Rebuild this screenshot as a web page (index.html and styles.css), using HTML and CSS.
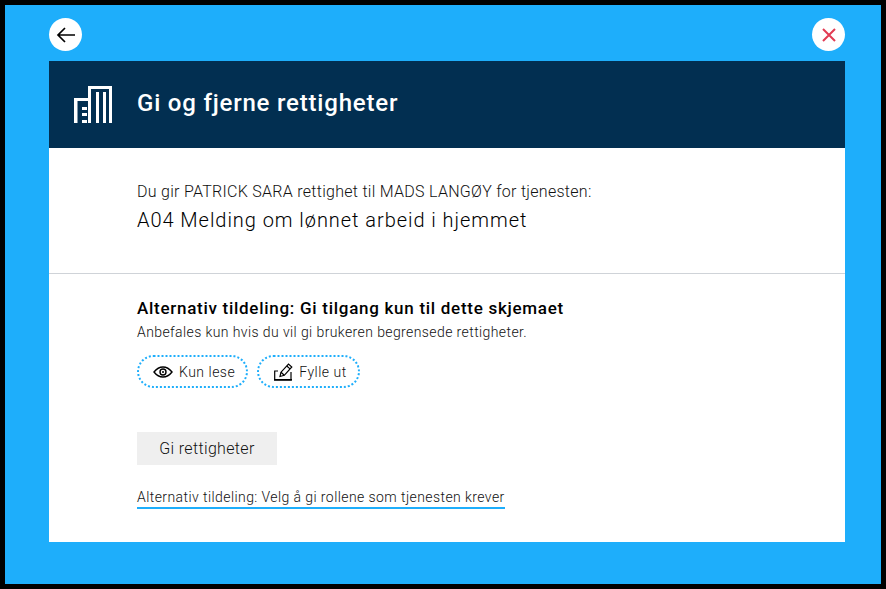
FILE: index.html
```html
<!DOCTYPE html>
<html lang="no">
<head>
<meta charset="utf-8">
<title>Gi og fjerne rettigheter</title>
<link rel="stylesheet" href="styles.css">
</head>
<body>
<div class="screen">
  <div class="topbar">
    <button class="round" aria-label="Tilbake">
      <svg width="20" height="16" viewBox="0 0 20 16" fill="none" stroke="#000" stroke-width="1.7"><path d="M19 8H2M9 1L2 8l7 7"/></svg>
    </button>
    <button class="round" aria-label="Lukk">
      <svg width="18" height="18" viewBox="0 0 18 18" fill="none" stroke="#e23b53" stroke-width="2"><path d="M3 3l12 12M15 3L3 15"/></svg>
    </button>
  </div>
  <main class="modal">
    <header class="modal-head">
      <svg class="head-icon" width="38" height="37" viewBox="0 0 38 37" fill="#fff"><path d="M14 0h24v37h-3V3H17v34h-3zM22 6h3v31h-3zM29 6h3v31h-3zM0 12h14v3H3.500v22H0zM8 21h5v3H8zM8 27h5v3H8zM8 34h5v3H8z"/></svg>
      <h1 class="head-title">Gi og fjerne rettigheter</h1>
    </header>
    <section class="intro">
      <p class="intro-line">Du gir PATRICK SARA rettighet til MADS LANGØY for tjenesten:</p>
      <p class="intro-service">A04 Melding om lønnet arbeid i hjemmet</p>
    </section>
    <section class="rights">
      <h2 class="rights-title">Alternativ tildeling: Gi tilgang kun til dette skjemaet</h2>
      <p class="rights-sub">Anbefales kun hvis du vil gi brukeren begrensede rettigheter.</p>
      <div class="chips">
        <span class="chip">
          <svg width="20" height="12" viewBox="0 0 20 12" fill="none" stroke="#000" stroke-width="1.400"><path d="M1 6c2.500-3.200 5.500-5 9-5s6.500 1.800 9 5c-2.500 3.200-5.500 5-9 5S3.500 9.200 1 6z"/><circle cx="10" cy="6" r="3"/><circle cx="10" cy="6" r="1" fill="#000" stroke="none"/></svg>
          Kun lese
        </span>
        <span class="chip">
          <svg width="20" height="18" viewBox="0 0 20 18" fill="none" stroke="#000" stroke-width="1.200"><path d="M5 8H1.700v9H18V9"/><path d="M1 16.800h18" stroke-width="1.600"/><path d="M7 13.500l1-4.300L15.500 1l3.300 3-7.500 8.300z"/><path d="M8 9.200l3.300 3M13.800 3l3.200 2.900"/></svg>
          Fylle ut
        </span>
      </div>
      <button class="submit">Gi rettigheter</button>
      <a class="alt-link" href="#">Alternativ tildeling: Velg å gi rollene som tjenesten krever</a>
    </section>
  </main>
</div>
</body>
</html>
```
FILE: styles.css
```css
* { box-sizing: border-box; }
html, body { margin: 0; padding: 0; background: #000; }
body { width: 886px; height: 589px; padding: 5px; font-family: "Roboto", "Liberation Sans", sans-serif; color: #000; }
.screen { width: 876px; height: 579px; background: #1eaefb; padding: 13px 36px 0 44px; }
.topbar { display: flex; justify-content: space-between; height: 43px; }
.round { width: 33px; height: 33px; border: 0; border-radius: 50%; background: #fff; padding: 0; display: flex; align-items: center; justify-content: center; }
.modal { background: #fff; height: 481px; }
.modal-head { height: 87px; background: #022f51; display: flex; align-items: center; padding-left: 25px; gap: 25px; }
.head-icon { flex: none; }
.head-title { margin: 0 0 4px; color: #fff; font-size: 24px; font-weight: 500; letter-spacing: .8px; }
.intro { height: 126px; border-bottom: 1px solid #cfd3d8; padding: 34px 0 0 88px; }
.intro-line { margin: 0; font-size: 16px; font-weight: 300; line-height: 20px; letter-spacing: .28px; color: #111; }
.intro-service { margin: 6px 0 0; font-size: 20px; font-weight: 300; line-height: 24px; letter-spacing: .95px; color: #000; }
.rights { padding: 23px 0 0 88px; display: flex; flex-direction: column; align-items: flex-start; }
.rights-title { margin: 0; font-size: 17px; font-weight: 500; line-height: 22px; letter-spacing: .72px; }
.rights-sub { margin: 4px 0 0; font-size: 14px; font-weight: 300; line-height: 18px; letter-spacing: .4px; color: #111; }
.chips { display: flex; gap: 9px; margin-top: 14px; }
.chip { height: 33px; border: 2px dotted #1eaefb; border-radius: 17px; padding: 0 11px 0 14px; display: flex; align-items: center; gap: 6px; font-size: 14px; font-weight: 300; letter-spacing: .5px; color: #111; }
.submit { margin-top: 44px; width: 140px; height: 33px; border: 0; background: #efefef; font: 300 16px "Roboto", sans-serif; letter-spacing: .35px; color: #111; }
.alt-link { margin-top: 22px; font-size: 14px; font-weight: 300; line-height: 20px; letter-spacing: .42px; color: #111; text-decoration: none; border-bottom: 2px solid #1eaefb; }
```
